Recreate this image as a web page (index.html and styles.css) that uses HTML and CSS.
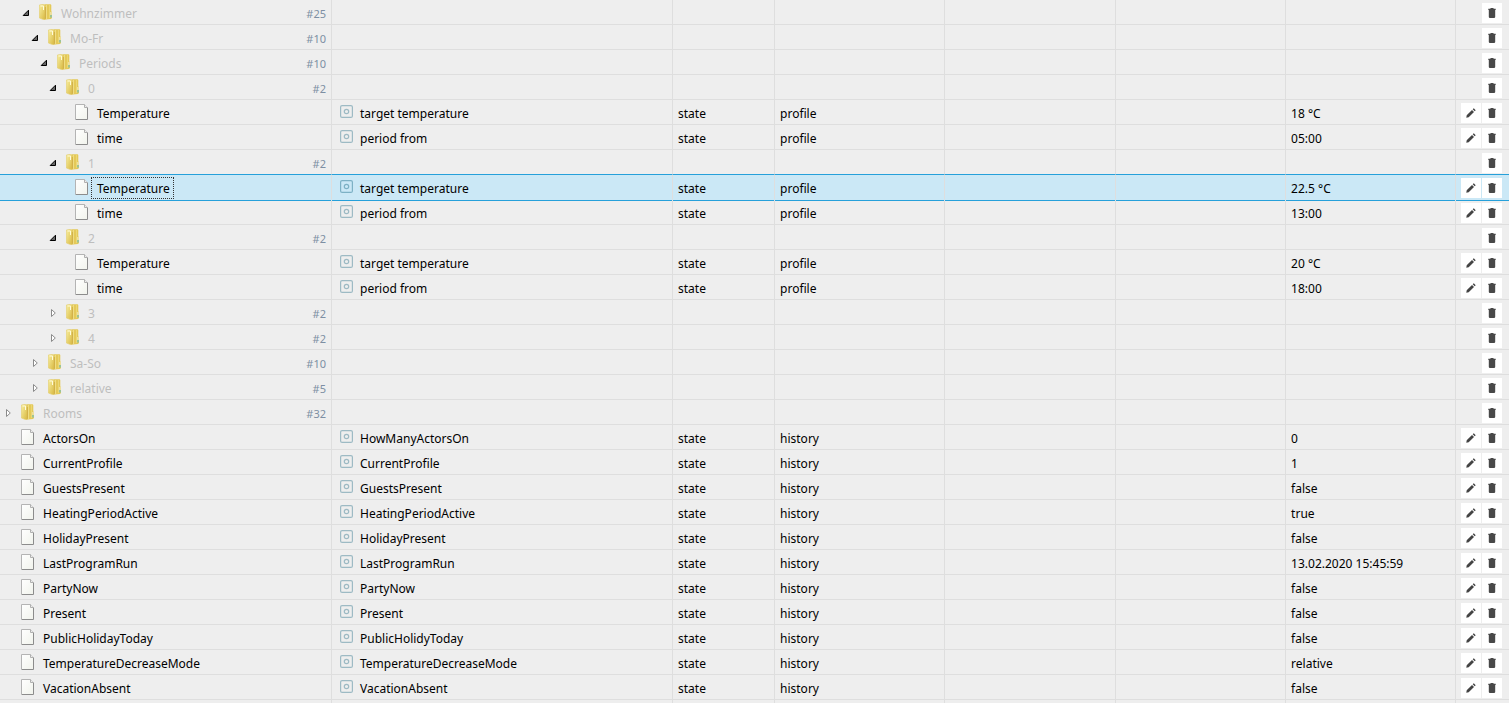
FILE: index.html
```html
<!DOCTYPE html>
<html lang="en">
<head>
<meta charset="utf-8">
<title>Objects</title>
<link rel="stylesheet" href="styles.css">
</head>
<body>
<svg class="sprite" aria-hidden="true">
  <defs>
    <linearGradient id="gold" x1="0" x2="1" y1="0" y2="1">
      <stop offset="0" stop-color="#f8efa0"/><stop offset="1" stop-color="#d8b840"/>
    </linearGradient>
    <linearGradient id="page" x1="0" x2="1" y1="0" y2="1">
      <stop offset="0" stop-color="#ffffff"/><stop offset="1" stop-color="#f1f3ec"/>
    </linearGradient>
    <symbol id="folder" viewBox="0 0 16 16">
      <path d="M5 1 6 .3H11.7L12.3 1V7.5L13 8V14L12 15 7 15.6H5Z" fill="#e4c958"/>
      <path d="M7.5 1V15" stroke="#efdd82"/>
      <path d="M10.5 1V14" stroke="#ebd774"/>
      <path d="M11.5 8h1v3h-1z" fill="#f8f6df"/>
      <path d="M11.5 11h1v2.5h-1z" fill="#56bfd4"/>
      <path d="M.4 1 4.5 .3 6.3 1.5V15.3L4.5 15.6 .4 14Z" fill="url(#gold)" stroke="#e2cb6a" stroke-width=".6"/>
      <path d="M1.5 2H4.5V6" fill="none" stroke="#fffbdc" stroke-width="1"/>
      <path d="M6.4 3V14.8" stroke="#cdab45" stroke-width=".9"/>
    </symbol>
    <symbol id="file" viewBox="0 0 16 16">
      <path d="M.5.5H9.5L12.5 3.5V15.5H.5Z" fill="url(#page)"/>
      <path d="M.5 15V.5H9.5L12.5 3.5" fill="none" stroke="#b4b4b4"/>
      <path d="M12.5 3.5V15.5H.5" fill="none" stroke="#8c8c8c"/>
      <path d="M9.5.5V3.5H12.5" fill="#ededed" stroke="#b0b0b0"/>
    </symbol>
    <symbol id="state" viewBox="0 0 13 13">
      <rect x=".6" y=".6" width="11.8" height="11.8" rx="1.5" fill="none" stroke="currentColor" stroke-width="1.2"/>
      <circle cx="6.5" cy="6.5" r="2.2" fill="none" stroke="currentColor" stroke-width="1.2"/>
    </symbol>
    <symbol id="open" viewBox="0 0 8 8"><path d="M6.5 1.2V6.5H1.2Z" fill="#666" stroke="#000"/></symbol>
    <symbol id="closed" viewBox="0 0 8 8"><path d="M2.5.5V7.5L6.3 4Z" fill="#fff" stroke="#8b8b8b"/></symbol>
    <symbol id="pencil" viewBox="0 0 10 10">
      <path d="M.3 9.7 .7 7.3 6 2 8 4 2.7 9.3ZM6.7 1.3 7.8.3 9.7 2.2 8.7 3.3Z" fill="#444"/>
    </symbol>
    <symbol id="trash" viewBox="0 0 10 10">
      <path d="M1.3 .8H3.5V0H6.5V.8H8.7V2.1H1.3ZM1.8 2.1H8.2V9Q8.2 10 7 10H3Q1.8 10 1.8 9Z" fill="#484848"/>
    </symbol>
  </defs>
</svg>
<main class="viewport">
  <table class="tree">
    <colgroup>
      <col class="col-id"><col class="col-wide"><col class="col-type"><col class="col-std"><col class="col-std"><col class="col-std"><col class="col-std"><col>
    </colgroup>
    <tbody id="rows"></tbody>
  </table>
</main>
<script src="tree.js"></script>
</body>
</html>
```
FILE: styles.css
```css
* { box-sizing: border-box; }
body {
  margin: 0;
  background: #eeeeee;
  color: #000;
  font: 12px/20px "Noto Sans", "Open Sans", sans-serif;
}
.sprite { position: absolute; width: 0; height: 0; }
.viewport { height: 100vh; overflow: hidden; }
.tree { width: 100%; table-layout: fixed; border-collapse: separate; border-spacing: 0; }
.col-id { width: 332px; }
.col-wide { width: 22.6%; }
.col-type { width: 102px; }
.col-std { width: 11.29%; }
.tree td {
  height: 25px;
  padding: 0 5px;
  border-right: 1px solid #dedede;
  border-bottom: 1px solid #dedede;
  white-space: nowrap;
  overflow: hidden;
}
.tree td:last-child { border-right: 0; }
.tree .id-cell { padding-left: 0; }
.tree .name-cell { padding-left: 8px; }
.line { display: flex; align-items: center; height: 24px; }
.indent { flex: none; width: calc(var(--level) * 9px); }
.expander {
  flex: none;
  display: flex;
  justify-content: center;
  width: 16px;
  margin-right: 5px;
  padding: 2px 0 0;
  border: 0;
  background: none;
}
.expander svg { width: 8px; height: 8px; }
.icon { flex: none; width: 16px; height: 16px; }
.label { padding: 2px 3px 0 5px; border: 1px solid transparent; line-height: 18px; margin-top: 2px; }
.folder .label { color: #bebebe; }
.count { margin-left: auto; padding-top: 4px; color: #7d8fa3; font-size: 11px; }
.state-icon { flex: none; width: 13px; height: 13px; margin: 0 7px 2px 0; color: #9dbac4; }
.name-cell span, .text { padding-top: 4px; }
.actions { display: flex; justify-content: flex-end; gap: 1px; padding: 2px 2px 0 0; }
.action {
  display: flex;
  align-items: center;
  justify-content: center;
  width: 20px;
  height: 20px;
  padding: 0;
  border: 0;
  background: #fff;
}
.action svg { width: 10px; height: 10px; }
.tree .selected td { background: #cbe8f6; border-bottom-color: #cbe8f6; }
.tree .before-selected td { border-bottom-color: #26a0da; border-right-color: #dedede; }
.tree .after-selected td { box-shadow: inset 0 1px #26a0da; }
.selected .label { border: 1px dotted #333; }
.selected .state-icon { color: #7db1c5; }
```
FILE: tree.js
```js
const folder = (level, id, count, open) => ({ level, id, count, open });
const state = (level, id, name, role, value, selected) => ({ level, id, name, role, value, selected });

const items = [
  folder(2, "Wohnzimmer", 25, true),
  folder(3, "Mo-Fr", 10, true),
  folder(4, "Periods", 10, true),
  folder(5, "0", 2, true),
  state(6, "Temperature", "target temperature", "profile", "18 °C"),
  state(6, "time", "period from", "profile", "05:00"),
  folder(5, "1", 2, true),
  state(6, "Temperature", "target temperature", "profile", "22.5 °C", true),
  state(6, "time", "period from", "profile", "13:00"),
  folder(5, "2", 2, true),
  state(6, "Temperature", "target temperature", "profile", "20 °C"),
  state(6, "time", "period from", "profile", "18:00"),
  folder(5, "3", 2, false),
  folder(5, "4", 2, false),
  folder(3, "Sa-So", 10, false),
  folder(3, "relative", 5, false),
  folder(0, "Rooms", 32, false),
  state(0, "ActorsOn", "HowManyActorsOn", "history", "0"),
  state(0, "CurrentProfile", "CurrentProfile", "history", "1"),
  state(0, "GuestsPresent", "GuestsPresent", "history", "false"),
  state(0, "HeatingPeriodActive", "HeatingPeriodActive", "history", "true"),
  state(0, "HolidayPresent", "HolidayPresent", "history", "false"),
  state(0, "LastProgramRun", "LastProgramRun", "history", "13.02.2020 15:45:59"),
  state(0, "PartyNow", "PartyNow", "history", "false"),
  state(0, "Present", "Present", "history", "false"),
  state(0, "PublicHolidayToday", "PublicHolidyToday", "history", "false"),
  state(0, "TemperatureDecreaseMode", "TemperatureDecreaseMode", "history", "relative"),
  state(0, "VacationAbsent", "VacationAbsent", "history", "false"),
];

const svg = (id, cls = "") => `<svg class="${cls}" aria-hidden="true"><use href="#${id}"/></svg>`;
const action = (id, label) => `<button class="action" type="button" aria-label="${label}">${svg(id)}</button>`;
const text = (value) => `<td><div class="text">${value || ""}</div></td>`;

function row(item, i) {
  const isFolder = item.count !== undefined;
  const classes = [
    isFolder ? "folder" : "state",
    item.selected ? "selected" : "",
    items[i + 1]?.selected ? "before-selected" : "",
    items[i - 1]?.selected ? "after-selected" : "",
  ].join(" ");
  const expander = isFolder
    ? `<button class="expander" type="button" aria-label="Toggle ${item.id}">${svg(item.open ? "open" : "closed")}</button>`
    : `<span class="expander"></span>`;
  return `<tr class="${classes}">
    <td class="id-cell"><div class="line"><span class="indent" style="--level:${item.level}"></span>${expander}${svg(isFolder ? "folder" : "file", "icon")}<span class="label">${item.id}</span>${isFolder ? `<span class="count">#${item.count}</span>` : ""}</div></td>
    <td class="name-cell"><div class="line">${isFolder ? "" : `${svg("state", "state-icon")}<span>${item.name}</span>`}</div></td>
    ${text(isFolder ? "" : "state")}${text(item.role)}${text()}${text()}${text(item.value)}
    <td><div class="actions">${isFolder ? "" : action("pencil", "Edit")}${action("trash", "Delete")}</div></td>
  </tr>`;
}

document.getElementById("rows").innerHTML =
  items.map(row).join("") + `<tr>${"<td></td>".repeat(8)}</tr>`;
```
